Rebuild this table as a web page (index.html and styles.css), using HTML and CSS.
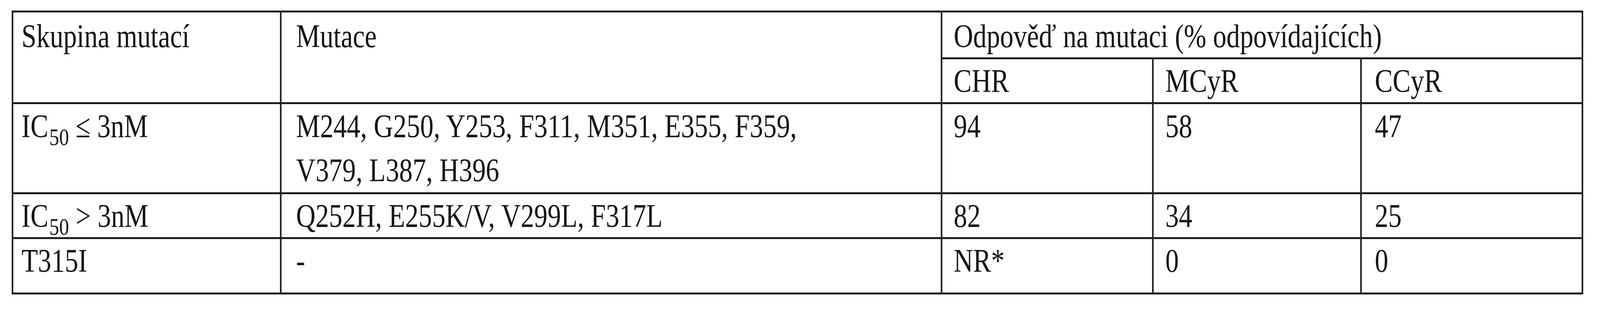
FILE: index.html
```html
<!DOCTYPE html>
<html lang="cs">
<head>
<meta charset="utf-8">
<title>Odpověď na mutaci</title>
<link rel="stylesheet" href="styles.css">
</head>
<body>
<div class="frame">
<div class="page">
<table class="mut-table">
  <colgroup>
    <col class="c-group">
    <col class="c-mut">
    <col class="c-chr">
    <col class="c-mcyr">
    <col class="c-ccyr">
  </colgroup>
  <thead>
    <tr class="r-head1">
      <th rowspan="2" class="col-group">Skupina mutací</th>
      <th rowspan="2" class="col-mut">Mutace</th>
      <th colspan="3" class="col-chr">Odpověď na mutaci (% odpovídajících)</th>
    </tr>
    <tr class="r-head2">
      <th class="col-chr">CHR</th>
      <th class="col-mcyr">MCyR</th>
      <th class="col-ccyr">CCyR</th>
    </tr>
  </thead>
  <tbody>
    <tr class="r-1">
      <td class="col-group">IC<span class="sub">50</span> ≤ 3nM</td>
      <td class="col-mut">M244, G250, Y253, F311, M351, E355, F359,<br>V379, L387, H396</td>
      <td class="col-chr">94</td>
      <td class="col-mcyr">58</td>
      <td class="col-ccyr">47</td>
    </tr>
    <tr class="r-2">
      <td class="col-group">IC<span class="sub">50</span> &gt; 3nM</td>
      <td class="col-mut">Q252H, E255K/V, V299L, F317L</td>
      <td class="col-chr">82</td>
      <td class="col-mcyr">34</td>
      <td class="col-ccyr">25</td>
    </tr>
    <tr class="r-3">
      <td class="col-group">T315I</td>
      <td class="col-mut">-</td>
      <td class="col-chr">NR*</td>
      <td class="col-mcyr">0</td>
      <td class="col-ccyr">0</td>
    </tr>
  </tbody>
</table>
</div>
</div>
</body>
</html>
```

FILE: styles.css
```css
html, body {
  margin: 0;
  padding: 0;
  background: #ffffff;
  overflow: hidden;
}

body {
  font-family: "Liberation Serif", "Times New Roman", serif;
  font-size: 85px;
  color: #141414;
}

/* The window is capped at 4096px wide: the 5058px-wide design is squeezed horizontally to fit. */
.frame {
  width: 100%;
  max-width: 4096px;
  height: 800px;
  overflow: hidden;
}

.page {
  width: 5058px;
  height: 800px;
  padding-top: 27px;
  box-sizing: border-box;
  transform: scaleX(0.8098);
  transform-origin: 0 0;
}

.mut-table {
  border-collapse: collapse;
  table-layout: fixed;
  width: 4968px;
  margin: 0 0 0 37px;
}

.c-group { width: 848px; }
.c-mut { width: 2089px; }
.c-chr { width: 668px; }
.c-mcyr { width: 658px; }
.c-ccyr { width: 700px; }

.mut-table th,
.mut-table td {
  border: 5px solid #1c1c1c;
  padding: 0;
  font-weight: normal;
  text-align: left;
  vertical-align: top;
  line-height: 110px;
  white-space: nowrap;
}

.mut-table .col-group { padding-left: 26px; }
.mut-table .col-mut { padding-left: 46px; }
.mut-table .col-chr { padding-left: 36px; }
.mut-table .col-mcyr { padding-left: 37px; }
.mut-table .col-ccyr { padding-left: 41px; }

.r-head1 th { padding-top: 5px; }

.r-1 td { line-height: 113px; }

.r-3 td { padding-bottom: 27px; }

.sub {
  font-size: 62px;
  line-height: 0;
  vertical-align: -20px;
  margin-left: 3px;
}
```
